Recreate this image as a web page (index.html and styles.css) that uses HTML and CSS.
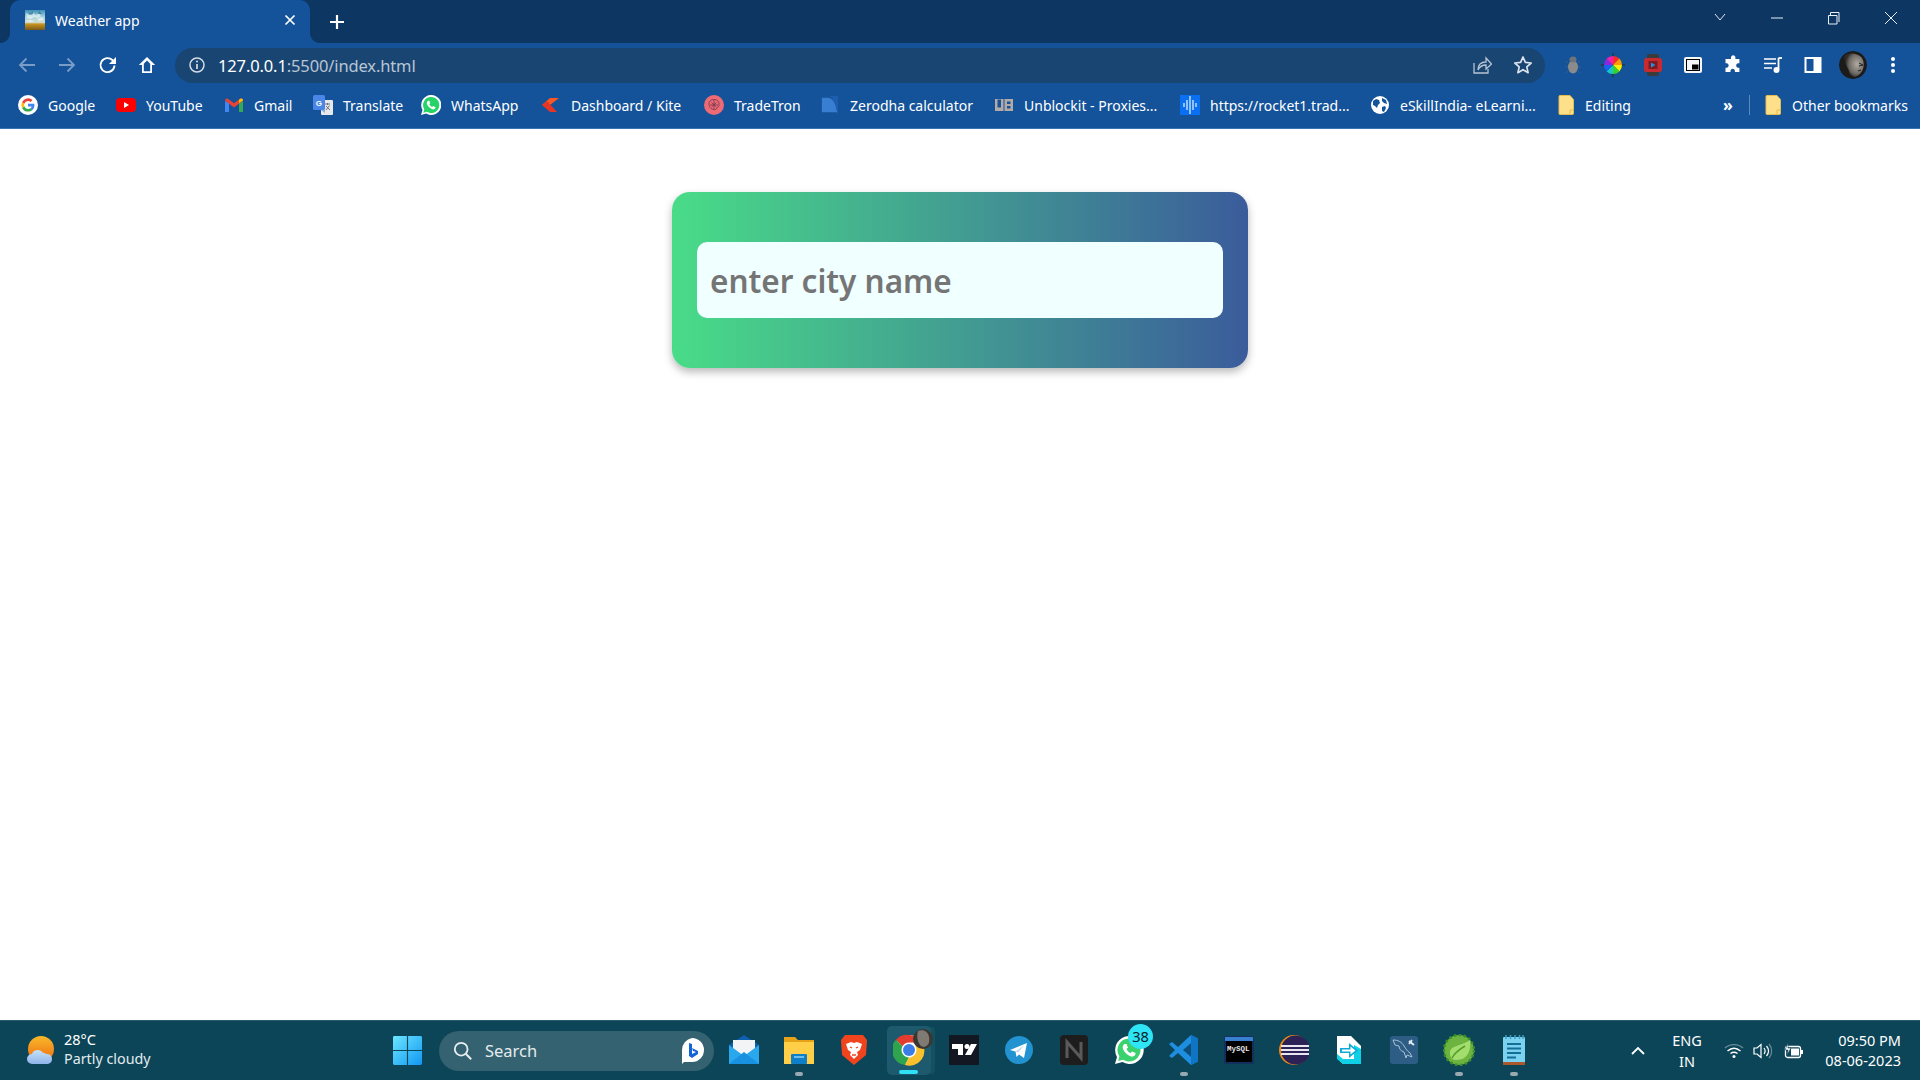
FILE: index.html
```html
<!DOCTYPE html>
<html lang="en">
<head>
<meta charset="utf-8">
<title>Weather app</title>
<link rel="stylesheet" href="styles.css">
</head>
<body>
<div class="browser">
  <header class="tabstrip">
    <div class="tab">
      <svg class="ico20" viewBox="0 0 20 20"><defs><linearGradient id="sky" x1="0" y1="0" x2="0" y2="1"><stop offset="0" stop-color="#3f8fb5"/><stop offset=".35" stop-color="#a9d3df"/><stop offset=".62" stop-color="#cfdcd0"/><stop offset=".7" stop-color="#c9941e"/><stop offset="1" stop-color="#7a5a1a"/></linearGradient></defs><rect width="20" height="20" fill="url(#sky)"/><path d="M1 3l3 2 3-3 4 3 3-2 2 3-3 2-4-1-3 2-4-1zM12 9l5-2 2 3-5 1zM0 11l5-1 5 1-4 1z" fill="#fff" opacity=".55"/><path d="M3 1l2 2 3-2v3l-3 1zM14 1l3 3-4 0z" fill="#1f6f97" opacity=".7"/></svg>
      <span class="tab-title">Weather app</span>
      <svg class="tab-close" viewBox="0 0 12 12"><path d="M1.500 1.500l9 9M10.500 1.500l-9 9" stroke="#fff" stroke-width="1.700" fill="none"/></svg>
    </div>
    <svg class="newtab" viewBox="0 0 14 14"><path d="M7 0v14M0 7h14" stroke="#fff" stroke-width="2.200"/></svg>
    <div class="winctl">
      <svg class="wc" viewBox="0 0 46 20"><path d="M18 6l5 6 5-6" stroke="#dfe7ef" fill="none"/></svg>
      <svg class="wc wc-gap" viewBox="0 0 46 20"><path d="M17 10h12" stroke="#e8eef4"/></svg>
      <svg class="wc wc-gap" viewBox="0 0 46 20"><path d="M17.500 7.500h8.500v8.500h-8.500zM19.500 7v-2.500h8.500v9.500" stroke="#e8eef4" fill="none"/></svg>
      <svg class="wc wc-gap" viewBox="0 0 46 20"><path d="M17 4l12 12M29 4l-12 12" stroke="#e8eef4" fill="none"/></svg>
    </div>
  </header>

  <nav class="toolbar">
    <span class="tb"><svg class="ico20" viewBox="0 0 20 20"><path d="M18 10H3M9.500 3.500L3 10l6.500 6.500" stroke="#7a9cc6" stroke-width="1.800" fill="none"/></svg></span>
    <span class="tb"><svg class="ico20" viewBox="0 0 20 20"><path d="M2 10h15M10.500 3.500L17 10l-6.500 6.500" stroke="#7a9cc6" stroke-width="1.800" fill="none"/></svg></span>
    <span class="tb tb-reload"><svg class="ico20" viewBox="0 0 20 20"><path d="M16.500 10.500a7 7 0 1 1-2-5.300L17 7.500" stroke="#fff" stroke-width="1.900" fill="none"/><path d="M18 2v7h-7z" fill="#fff"/></svg></span>
    <span class="tb"><svg class="ico20" viewBox="0 0 20 20"><path d="M10 2L1.800 10H5v8h10v-8h3.200zM6.800 16.200V8.800L10 5.600l3.200 3.200v7.400z" fill="#fff" fill-rule="evenodd"/></svg></span>
    <div class="omnibox">
      <svg class="info" viewBox="0 0 16 16"><circle cx="8" cy="8" r="7" stroke="#d5dde6" stroke-width="1.500" fill="none"/><path d="M8 7v5" stroke="#d5dde6" stroke-width="1.700"/><circle cx="8" cy="4.600" r="1" fill="#d5dde6"/></svg>
      <span class="url">127.0.0.1<span class="url-dim">:5500/index.html</span></span>
      <svg class="omni-ico" viewBox="0 0 20 20"><path d="M2 8v10h14v-4" stroke="#b7c3d1" stroke-width="1.300" fill="none"/><path d="M6 15c0-5 3-8 8-8V3l5.500 6-5.500 5v-4c-4 0-6 1-8 5z" stroke="#b7c3d1" stroke-width="1.300" fill="none"/></svg>
      <svg class="omni-ico star" viewBox="0 0 20 20"><path d="M10 2l2.400 5.400 5.800.6-4.400 3.900 1.300 5.800L10 14.700l-5.100 3 1.300-5.800L1.800 8l5.800-.6z" stroke="#dbe3ec" stroke-width="1.700" fill="none" stroke-linejoin="round"/></svg>
    </div>
    <div class="exts">
      <span class="tb"><svg class="ico20" viewBox="0 0 20 20"><ellipse cx="10" cy="12" rx="5" ry="6.500" fill="#8b8b8b"/><ellipse cx="10" cy="4.500" rx="3.500" ry="3" fill="#6e7479"/><path d="M5 8l-2-2M15 8l2-2M5 12H2M15 12h3M5 16l-2 2M15 16l2 2" stroke="#3f5d7e"/></svg></span>
      <span class="tb"><svg class="ico24" viewBox="0 0 24 24"><path d="M12 0v24M0 12h24" stroke="#253746" stroke-width="1.500"/><path d="M12 12V3a9 9 0 0 1 6.400 2.600z" fill="#ff2a2a"/><path d="M12 12l6.400-6.400A9 9 0 0 1 21 12z" fill="#ff9a00"/><path d="M12 12h9a9 9 0 0 1-2.600 6.400z" fill="#f5ef00"/><path d="M12 12l6.400 6.400A9 9 0 0 1 12 21z" fill="#35d42b"/><path d="M12 12v9a9 9 0 0 1-6.400-2.600z" fill="#18c8c8"/><path d="M12 12l-6.400 6.400A9 9 0 0 1 3 12z" fill="#1c62f0"/><path d="M12 12H3a9 9 0 0 1 2.600-6.400z" fill="#8a28e0"/><path d="M12 12L5.600 5.600A9 9 0 0 1 12 3z" fill="#f021b0"/></svg></span>
      <span class="tb"><svg class="ico24" viewBox="0 0 24 24"><rect x="6" y="1" width="12" height="22" rx="2" fill="#3b3b3b"/><rect x="3" y="5" width="18" height="14" rx="2.500" fill="#c92a2f"/><rect x="7.500" y="8" width="9" height="8" fill="#7a1c22"/><path d="M10 9.500v5l4.500-2.500z" fill="#2d8be0"/></svg></span>
      <span class="tb"><svg class="ico20" viewBox="0 0 20 20"><rect x="1" y="2" width="18" height="16" rx="2" fill="#f4f6f8"/><rect x="3" y="4" width="14" height="12" fill="#000"/><rect x="4" y="5" width="12" height="10" fill="#f4f6f8"/><rect x="9" y="9.500" width="6.500" height="5" fill="#000"/></svg></span>
      <span class="tb"><svg class="ico20" viewBox="0 0 20 20"><path d="M8 2a2.300 2.300 0 0 1 4.400 0v2h4v4.300h-1.600a2.300 2.300 0 0 0 0 4.400h1.600V17h-4.500v-1.500a2.300 2.300 0 0 0-4.400 0V17H2.500v-4.300H4a2.300 2.300 0 0 0 0-4.400H2.500V4H8z" fill="#fff"/></svg></span>
      <span class="tb"><svg class="ico20" viewBox="0 0 20 20"><path d="M1 4h12M1 8.500h12M1 13h8" stroke="#fff" stroke-width="1.700"/><path d="M15.500 3v11.500" stroke="#fff" stroke-width="1.800"/><path d="M15.500 3H19" stroke="#fff" stroke-width="1.800"/><circle cx="13.500" cy="15" r="3" fill="#fff"/></svg></span>
      <span class="tb"><svg class="ico20" viewBox="0 0 20 20"><path d="M1.500 2h17v16h-17zM3.500 4v12h7V4z" fill="#fff" fill-rule="evenodd"/></svg></span>
      <span class="tb"><span class="avatar"><svg class="ico28" viewBox="0 0 28 28"><defs><radialGradient id="face" cx=".65" cy=".45" r=".6"><stop offset="0" stop-color="#b0aaa2"/><stop offset=".7" stop-color="#6d6963"/><stop offset="1" stop-color="#2d2b29"/></radialGradient></defs><circle cx="14" cy="14" r="14" fill="#1c1b1a"/><path d="M6 4c6-3 16-1 18 5 2 6 0 14-8 17-4-1-6-3-6-6-2-4-6-11-4-16z" fill="url(#face)"/><path d="M20 12l4 2-4 1M19 20l3-1" stroke="#222" fill="none"/></svg></span></span>
      <span class="tb"><svg class="ico20" viewBox="0 0 20 20"><circle cx="10" cy="4" r="2" fill="#fff"/><circle cx="10" cy="10" r="2" fill="#fff"/><circle cx="10" cy="16" r="2" fill="#fff"/></svg></span>
    </div>
  </nav>

  <div class="bookmarks">
    <a class="bm"><svg class="ico20" viewBox="0 0 20 20"><circle cx="10" cy="10" r="10" fill="#fff"/><path d="M16.400 10.200c0-.5 0-1-.1-1.400H10v2.700h3.600a3 3 0 0 1-1.300 2l2.100 1.600c1.200-1.200 2-2.900 2-4.900z" fill="#4285f4"/><path d="M10 16.500c1.800 0 3.300-.6 4.400-1.600l-2.100-1.600a4 4 0 0 1-6-2.100l-2.200 1.700a6.500 6.500 0 0 0 5.900 3.600z" fill="#34a853"/><path d="M6.300 11.200a4 4 0 0 1 0-2.500L4.100 7a6.500 6.500 0 0 0 0 5.900z" fill="#fbbc05"/><path d="M10 6c1 0 1.900.3 2.600 1l1.900-1.900A6.500 6.500 0 0 0 4.100 7l2.200 1.700A3.900 3.900 0 0 1 10 6z" fill="#ea4335"/></svg><span class="bm-t t-google">Google</span></a>
    <a class="bm"><svg class="ico20" viewBox="0 0 20 20"><rect y="3" width="20" height="14" rx="4" fill="#f00"/><path d="M8 7v6l5-3z" fill="#fff"/></svg><span class="bm-t t-yt">YouTube</span></a>
    <a class="bm"><svg class="ico18" viewBox="0 0 18 14"><path d="M0 3v11h4V5z" fill="#4285f4"/><path d="M14 5v9h4V3z" fill="#34a853"/><path d="M0 2.500a2 2 0 0 1 3.200-1.600L9 5.300l5.800-4.400A2 2 0 0 1 18 2.500L9 9.500z" fill="#ea4335"/><path d="M14 1.700V5l4-2.500V2a2 2 0 0 0-3.200-1.100z" fill="#fbbc05"/></svg><span class="bm-t t-gmail">Gmail</span></a>
    <a class="bm"><svg class="ico20" viewBox="0 0 20 20"><rect x="8" y="5" width="12" height="15" rx="1" fill="#e6e8ec"/><path d="M12 9h5M14.500 8v2M13 15l3.500-4.500M13 11l4 4" stroke="#666" stroke-width=".9" fill="none"/><rect width="12" height="15" rx="1.500" fill="#4a86e8"/><text x="2.800" y="11" class="gt">G</text><path d="M8 15l4 3v-3z" fill="#8faadc"/></svg><span class="bm-t t-tr">Translate</span></a>
    <a class="bm"><svg class="ico20" viewBox="0 0 20 20"><path d="M10 0a10 10 0 0 0-8.500 15L0 20l5.200-1.400A10 10 0 1 0 10 0z" fill="#fff"/><path d="M10 2a8 8 0 0 0-6.700 12.200l-1 3.500 3.600-1A8 8 0 1 0 10 2z" fill="#25d366"/><path d="M7.300 5.800c-.5 0-1.500 1-1.500 2.300 0 2.500 3.500 6 6.300 6.300 1.300 0 2.300-1 2.300-1.700v-.8l-2.300-1-1 1c-1.200-.4-2.300-1.500-2.800-2.800l1-.9-1-2.400z" fill="#fff"/></svg><span class="bm-t t-wa">WhatsApp</span></a>
    <a class="bm"><svg class="ico18" viewBox="0 0 18 14"><path d="M0 7l8-7h9L8 7z" fill="#ff5722"/><path d="M0 7l5-4 10 11H8z" fill="#e53525"/></svg><span class="bm-t t-kite">Dashboard / Kite</span></a>
    <a class="bm"><svg class="ico20" viewBox="0 0 20 20"><circle cx="10" cy="10" r="10" fill="#ee6a74"/><path d="M6 6c2-2 6-2 8 0 2 2 1 6-1 7l-2 2-3-1c-3-1-4-6-2-8zM10 5v9M6 10h8M7.500 7.500L12.500 12M12.500 7.500L7.500 12" stroke="#7d3c54" fill="none" stroke-width=".9"/></svg><span class="bm-t t-tt">TradeTron</span></a>
    <a class="bm"><svg class="ico18" viewBox="0 0 18 20"><path d="M0 2h7c6 1 9 8 10 16H0z" fill="#387ed1"/><path d="M8 0h10v20h-1C16 10 13 3 8 0z" fill="#1d5fae"/></svg><span class="bm-t t-zc">Zerodha calculator</span></a>
    <a class="bm"><svg class="ico18" viewBox="0 0 18 14"><path d="M0 1h8.500v12H0zM2.500 1.500v8h3.500v-8zM9.500 1H18v12H9.500zM12 3.500v2.500h3.500V3.500zM12 8v2.500h3.500V8z" fill="#b3aaa8" fill-rule="evenodd"/></svg><span class="bm-t t-ub">Unblockit - Proxies...</span></a>
    <a class="bm"><svg class="ico20" viewBox="0 0 20 20"><rect width="20" height="20" fill="#0a6ff0"/><path d="M10 1v18M7 5v10M13 5v10M4 8v4M16 8v4" stroke="#d9efff" stroke-width="1.300"/></svg><span class="bm-t t-rk">https://rocket1.trad...</span></a>
    <a class="bm"><svg class="ico20" viewBox="0 0 20 20"><circle cx="10" cy="10" r="9" fill="#fff"/><path d="M3 6l3-2 3 1 1 3-2 2-1 3-2-2-2-1zM12 3l4 2 1 4-3-1-2-2zM12 12l3-1 1 2-2 4-2-1z" fill="#15539b"/></svg><span class="bm-t t-es">eSkillIndia- eLearni...</span></a>
    <a class="bm"><svg class="ico-folder" viewBox="0 0 16 20"><path d="M1 1.500a1 1 0 0 1 1-1h10l3.500 4v14a1 1 0 0 1-1 1H2a1 1 0 0 1-1-1z" fill="#fee08a" stroke="#e4bd4e"/><path d="M15 15h-3v4" fill="none" stroke="#e4bd4e"/></svg><span class="bm-t t-ed">Editing</span></a>
    <span class="more">»</span>
    <span class="sep"></span>
    <a class="bm"><svg class="ico-folder" viewBox="0 0 16 20"><path d="M1 1.500a1 1 0 0 1 1-1h10l3.500 4v14a1 1 0 0 1-1 1H2a1 1 0 0 1-1-1z" fill="#fee08a" stroke="#e4bd4e"/><path d="M15 15h-3v4" fill="none" stroke="#e4bd4e"/></svg><span class="bm-t t-ob">Other bookmarks</span></a>
  </div>

  <main class="page">
    <form class="card">
      <input class="city" type="text" placeholder="enter city name">
    </form>
  </main>

  <footer class="taskbar">
    <div class="weather">
      <svg class="ico32" viewBox="0 0 32 32"><defs><linearGradient id="sun" x1="0" y1="0" x2="0" y2="1"><stop offset="0" stop-color="#f9b82a"/><stop offset="1" stop-color="#ee6c12"/></linearGradient><linearGradient id="cloud" x1="0" y1="0" x2="0" y2="1"><stop offset="0" stop-color="#c7e2f8"/><stop offset="1" stop-color="#8fb4ea"/></linearGradient></defs><circle cx="15" cy="14" r="13" fill="url(#sun)"/><path d="M6 29a5 5 0 0 1 0-10c1-4 8-6 11-1 1-.500 2 0 3 1a5 5 0 0 1 6 5 5 5 0 0 1-4 5z" fill="url(#cloud)"/></svg>
      <div class="w-text"><span class="w-temp">28°C</span><span class="w-desc">Partly cloudy</span></div>
    </div>
    <svg class="start" viewBox="0 0 30 30"><defs><linearGradient id="win" x1="0" y1="0" x2="1" y2="1"><stop offset="0" stop-color="#6be6ff"/><stop offset="1" stop-color="#1197f2"/></linearGradient></defs><path d="M0 1.500A1.500 1.500 0 0 1 1.500 0h12.900v14.400H0zM15.600 0h12.900A1.500 1.500 0 0 1 30 1.500v12.900H15.600zM0 15.600h14.400V30H1.500A1.500 1.500 0 0 1 0 28.500zM15.600 15.600H30v12.900a1.500 1.500 0 0 1-1.500 1.500H15.600z" fill="url(#win)"/></svg>
    <div class="search">
      <svg class="s-glass" viewBox="0 0 22 22"><circle cx="9" cy="9" r="7" stroke="#e8eef0" stroke-width="2" fill="none"/><path d="M14 14l6 6" stroke="#e8eef0" stroke-width="2.200"/></svg>
      <span class="s-text">Search</span>
      <svg class="s-bing" viewBox="0 0 26 28"><path d="M13 1a12 12 0 0 1 0 24H5l-2 2V13A12 12 0 0 1 13 1z" fill="#fff"/><path d="M10 6l3 1v10l4-2-3-1-1-3 6 3v3l-6 4-3-2z" fill="#1464d8"/></svg>
    </div>
    <div class="apps">
      <span class="app"><svg class="ico32" viewBox="0 0 32 32"><path d="M1 11L16 1l15 10v17H1z" fill="#0f5fb0"/><path d="M5 6h22v14H5z" fill="#f2f4f6"/><path d="M1 11l15 11 15-11v19H1z" fill="#2aa8ee"/><path d="M1 30l15-12 15 12z" fill="#1892e0"/></svg></span>
      <span class="app"><svg class="ico32" viewBox="0 0 32 32"><path d="M1 3h11l3 3h16v6H1z" fill="#e6a317"/><path d="M1 8h30v22H1z" fill="#ffcf48"/><rect x="8" y="20" width="16" height="10" rx="1" fill="#0e7fc8"/><path d="M11 23h10" stroke="#8fd0f5" stroke-width="1.500"/></svg><i class="dot"></i></span>
      <span class="app"><svg class="ico32" viewBox="0 0 32 32"><path d="M7 1h18l4 5-1 15-12 10L4 21 3 6z" fill="#f0441f"/><path d="M8 10l5-2 3 1 3-1 5 2-2 6-3 2 1 3-4 4-4-4 1-3-3-2z" fill="#fff"/><path d="M12 13l2 1M18 14l2-1M14 21h4" stroke="#f0441f" stroke-width="1.300"/></svg></span>
      <span class="app app-active"><svg class="ico32" viewBox="0 0 32 32"><circle cx="16" cy="16" r="15" fill="#fff"/><path d="M16 1a15 15 0 0 1 13 7.500H16a7.500 7.500 0 0 0-6.500 3.800L3 5.800A15 15 0 0 1 16 1z" fill="#e33b2e"/><path d="M3 5.800l6.500 6.500a7.500 7.500 0 0 0 6.500 11.200L12 31A15 15 0 0 1 3 5.800z" fill="#2ea44f"/><path d="M29 8.500A15 15 0 0 1 12 31l4-7.500a7.500 7.500 0 0 0 6.500-11.200z" fill="#f9c02b"/><circle cx="16" cy="16" r="6" fill="#3a7de8"/></svg><svg class="badge-avatar" viewBox="0 0 20 20"><circle cx="10" cy="10" r="10" fill="#3a3733"/><path d="M5 2c5-2 10 0 11 6s-1 9-5 10c-3 0-5-3-6-6s-1-7 0-10z" fill="#7f7a73"/></svg><i class="bar"></i></span>
      <span class="app"><svg class="ico30" viewBox="0 0 30 30"><rect width="30" height="30" fill="#131722"/><path d="M3 9h11v11H9v-6H3z" fill="#fff"/><circle cx="18" cy="11.500" r="2.500" fill="#fff"/><path d="M22 9h6l-6 11h-6z" fill="#fff"/></svg></span>
      <span class="app"><svg class="ico28" viewBox="0 0 28 28"><circle cx="14" cy="14" r="14" fill="#2392d0"/><path d="M5 14L22 7l-3 15-5-3.500-2.500 2.500-1-5.500z" fill="#fff"/><path d="M10.500 15.500l9-6.500-6.500 7.500" fill="#b7dcf0"/></svg></span>
      <span class="app"><svg class="ico30" viewBox="0 0 30 30"><rect x="1" width="28" height="30" rx="4" fill="#1d1d1d"/><path d="M8 23V7l14 16V7" stroke="#5a5a5a" stroke-width="3" fill="none"/></svg></span>
      <span class="app"><svg class="ico32" viewBox="0 0 32 32"><path d="M16 2a14 14 0 0 0-12 21L2 30l7.500-2A14 14 0 1 0 16 2z" fill="#fff"/><path d="M16 4.500a11.500 11.500 0 0 0-9.600 17.800L5.300 27l4.700-1.200A11.500 11.500 0 1 0 16 4.500z" fill="#3bd16f"/><path d="M12 10c-1 0-2.300 1.500-2.300 3.300 0 3.700 5.300 9 9.400 9.400 2 0 3.400-1.500 3.400-2.600v-1.100l-3.400-1.500-1.500 1.500c-1.800-.6-3.400-2.200-4.100-4.100l1.500-1.400-1.500-3.500z" fill="#fff"/></svg><span class="badge">38</span></span>
      <span class="app"><svg class="ico32" viewBox="0 0 32 32"><path d="M23 1l7 3.500v23L23 31 10 19l-6 5-3-2 6-6-6-6 3-2 6 5z" fill="#1e8fe0"/><path d="M23 1l7 3.500v23L23 31V1z" fill="#0f74c4"/><path d="M23 9l-8 7 8 7z" fill="#0b4f7a"/></svg><i class="dot"></i></span>
      <span class="app"><svg class="ico30" viewBox="0 0 30 30"><rect y="1" width="30" height="28" rx="2" fill="#12305e"/><rect x="1" y="2" width="28" height="4" fill="#3a80d0"/><rect x="2" y="6" width="26" height="21" fill="#000"/><text x="3" y="15.500" class="my">MySQL</text></svg></span>
      <span class="app"><svg class="ico30" viewBox="0 0 30 30"><circle cx="15" cy="15" r="15" fill="#f08a17"/><circle cx="16.500" cy="15" r="14.500" fill="#2c2255"/><path d="M2 11h29M2 15h29M2 19h29" stroke="#e8e6f0" stroke-width="2.200"/></svg></span>
      <span class="app"><svg class="ico30" viewBox="0 0 30 30"><path d="M3 1h14l10 10v18H9l-6-6z" fill="#fff"/><path d="M3 19l6 5h18v5H9l-6-5z" fill="#0fd0e6"/><path d="M20 10l7 4v15h-7z" fill="#0fd0e6"/><path d="M6 13h9V8l9 7.500-9 7.500v-5H6z" fill="#0fa9d6"/><path d="M8 14.500h8.500v-3l5 4-5 4v-3H8z" fill="#fff"/></svg></span>
      <span class="app"><svg class="ico28" viewBox="0 0 28 28"><rect width="28" height="28" rx="3" fill="#2d5d85"/><path d="M3 4c5 0 9 2 11 6 2 3 3 5 6 7l2 4-5-2-1 3-2-6c-3-1-5-3-5-6L5 9z" fill="none" stroke="#a8c2d6" stroke-width="1"/><path d="M19 5l5 4M22 4l-3 4" stroke="#e4edf3" stroke-width="1.800"/></svg></span>
      <span class="app"><svg class="ico32" viewBox="0 0 32 32"><circle cx="16" cy="16" r="15" fill="#6cb33f"/><circle cx="16" cy="16" r="15" fill="none" stroke="#3a8f2a" stroke-width="2.500" stroke-dasharray="2.500 2.500"/><path d="M27 6c1 9-1 20-14 20-4 0-6-3-6-7 0-8 10-6 20-13z" fill="#a3dd6d"/><path d="M9 24c3-6 8-9 13-12" stroke="#4f9d2b" stroke-width="1.500" fill="none"/></svg><i class="dot"></i></span>
      <span class="app"><svg class="ico-note" viewBox="0 0 22 30"><rect y="2" width="22" height="28" rx="1" fill="#7bd2f0"/><rect y="27" width="22" height="3" fill="#a8582a"/><path d="M4 9h14M4 13.500h14M4 18h14M4 22.500h9" stroke="#136f96" stroke-width="2"/><path d="M3 0v4M7.500 0v4M12 0v4M16.500 0v4M20 0v4" stroke="#3aa0c4" stroke-width="1.500"/></svg><i class="dot"></i></span>
    </div>
    <div class="tray">
      <svg class="t-chev" viewBox="0 0 14 9"><path d="M1 8l6-6 6 6" stroke="#fff" stroke-width="1.800" fill="none"/></svg>
      <div class="lang"><span>ENG</span><span>IN</span></div>
      <svg class="t-wifi" viewBox="0 0 20 16"><path d="M1 5c5-4.500 13-4.500 18 0" stroke="#6b8d99" stroke-width="1.300" fill="none"/><path d="M3.500 8c4-3.500 9-3.500 13 0M6.500 10.500c2-1.500 5-1.500 7 0" stroke="#fff" stroke-width="1.400" fill="none"/><circle cx="10" cy="13.500" r="1.500" fill="#fff"/></svg>
      <svg class="t-vol" viewBox="0 0 20 16"><path d="M1 5h3l4-3.500v13L4 11H1z" stroke="#fff" stroke-width="1.200" fill="none"/><path d="M11 5c1.500 2 1.500 4 0 6M13.500 3c2.500 3 2.500 7 0 10" stroke="#fff" stroke-width="1.200" fill="none"/><path d="M16 1c3.500 4 3.500 10 0 14" stroke="#6b8d99" stroke-width="1.200" fill="none"/></svg>
      <svg class="t-bat" viewBox="0 0 20 16"><rect x="1.500" y="3.500" width="15" height="11" rx="2" stroke="#fff" stroke-width="1.300" fill="none"/><rect x="17" y="7" width="2" height="4" fill="#fff"/><rect x="7" y="5.500" width="8" height="7" fill="#fff"/><path d="M4 0L1 7h3l-1 5 4-7H4z" fill="#fff" stroke="#0c4558" stroke-width=".6"/></svg>
      <div class="clock"><span>09:50 PM</span><span>08-06-2023</span></div>
    </div>
  </footer>
</div>
</body>
</html>
```
FILE: styles.css
```css
* { box-sizing: border-box; }
html, body { margin: 0; height: 100%; }
body { font-family: "Noto Sans", "Open Sans", "Liberation Sans", sans-serif; color: #fff; background: #fff; }
svg { display: block; flex: none; }
.browser { height: 1080px; display: flex; flex-direction: column; overflow: hidden; }

.ico18 { width: 18px; height: 18px; }
.ico20 { width: 20px; height: 20px; }
.ico24 { width: 24px; height: 24px; }
.ico28 { width: 28px; height: 28px; }
.ico30 { width: 30px; height: 30px; }
.ico32 { width: 32px; height: 32px; }
.ico-folder { width: 16px; height: 20px; }
.ico-note { width: 22px; height: 30px; }

/* tab strip */
.tabstrip { height: 43px; background: #0d3663; display: flex; align-items: flex-end; padding-left: 10px; flex: none; }
.tab { position: relative; width: 300px; height: 43px; background: #14539a; border-radius: 10px 10px 0 0; display: flex; align-items: center; padding: 0 15px 3px 15px; }
.tab::before, .tab::after { content: ""; position: absolute; bottom: 0; width: 10px; height: 10px; }
.tab::before { left: -10px; background: radial-gradient(circle at 0 0, transparent 9.500px, #14539a 10.500px); }
.tab::after { right: -10px; background: radial-gradient(circle at 100% 0, transparent 9.500px, #14539a 10.500px); }
.tab-title { margin-left: 10px; font-size: 14px; flex: 1; }
.tab-close { width: 12px; height: 12px; margin-right: -1px; }
.newtab { width: 14px; height: 14px; margin: 0 0 14px 20px; }
.winctl { margin-left: auto; display: flex; align-self: flex-start; padding: 8px 6px 0 0; }
.wc { width: 46px; height: 20px; }
.wc-gap { margin-left: 11px; }

/* toolbar */
.toolbar { height: 40px; background: #14539a; display: flex; align-items: flex-end; padding-left: 7px; flex: none; }
.tb { width: 40px; height: 35px; padding-bottom: 1px; display: flex; align-items: center; justify-content: center; flex: none; }
.tb-reload { padding-left: 2px; }
.omnibox { width: 1370px; height: 35px; margin-left: 8px; border-radius: 18px; background: #194573; display: flex; align-items: center; padding: 0 12px 1px 14px; }
.info { width: 16px; height: 16px; }
.url { margin-left: 13px; font-size: 16.500px; letter-spacing: -.13px; flex: 1; }
.url-dim { color: #b9c6d4; }
.omni-ico { width: 20px; height: 20px; }
.star { margin-left: 21px; }
.exts { display: flex; margin-left: 8px; }
.avatar { width: 28px; height: 28px; border-radius: 50%; overflow: hidden; }

/* bookmarks */
.bookmarks { height: 46px; background: #14539a; border-bottom: 1px solid #3b74b4; display: flex; align-items: center; padding: 0 0 1px 18px; flex: none; font-size: 14px; }
.bm { display: flex; align-items: center; flex: none; }
.bm-t { margin-left: 10px; white-space: nowrap; }
.t-google { width: 48px; margin-right: 20px; }
.t-yt { width: 58px; margin-right: 21px; }
.t-gmail { width: 38px; margin: 0 21px 0 11px; }
.t-tr { width: 58px; margin-right: 20px; }
.t-wa { width: 69px; margin-right: 22px; }
.t-kite { width: 112px; margin: 0 21px 0 11px; }
.t-tt { width: 65px; margin-right: 22px; }
.t-zc { width: 124px; margin: 0 21px 0 11px; }
.t-ub { width: 135px; margin: 0 21px 0 11px; }
.t-rk { width: 138px; margin-right: 22px; }
.t-es { width: 136px; margin-right: 22px; }
.t-ed { width: 47px; margin-left: 11px; }
.more { margin-left: 91px; font-size: 16px; font-weight: 700; width: 12px; }
.sep { width: 1px; height: 20px; background: #5e8abb; margin: 0 15px 0 14px; }
.t-ob { margin-left: 11px; }

/* page */
.page { flex: 1; background: #fff; padding-top: 63px; }
.card { width: 576px; margin: 0 auto; padding: 50px 25px; border-radius: 18px; background: linear-gradient(to right, #49dc88, #3b5c9b); box-shadow: 0 4px 8px rgba(0, 0, 0, .28); }
.city { display: block; width: 100%; height: 76px; border: 0; outline: 0; border-radius: 10px; background: #f0ffff; padding: 0 13px; font: 600 31.500px "Noto Sans", sans-serif; color: #333; }
.city::placeholder { color: #757575; opacity: 1; }

/* taskbar */
.taskbar { height: 60px; background: #0c4558; border-top: 1px solid #2a5b6c; display: flex; align-items: center; flex: none; font-size: 14.500px; }
.weather { width: 393px; padding: 0 0 0 26px; display: flex; align-items: center; gap: 6px; }
.w-text { display: flex; flex-direction: column; line-height: 20px; margin-top: -4px; }
.w-desc { color: #e2ebee; font-size: 14.300px; }
.start { width: 29px; height: 29px; }
.search { width: 275px; height: 40px; margin-left: 17px; border-radius: 20px; background: #346270; display: flex; align-items: center; padding: 0 9px 0 14px; }
.s-glass { width: 20px; height: 20px; }
.s-text { margin-left: 12px; font-size: 16.500px; color: #e4ecee; flex: 1; }
.s-bing { width: 26px; height: 28px; }
.apps { display: flex; margin-left: 2px; }
.app { position: relative; width: 55px; height: 49px; padding-bottom: 2px; display: flex; align-items: center; justify-content: center; }
.app-active { background: #1d5a6d; border-radius: 5px; width: 44px; margin: 0 5.500px; box-shadow: 5px 0 0 -1px #15505f; }
.dot { position: absolute; left: 50%; bottom: -1px; width: 8px; height: 4px; margin-left: -4px; border-radius: 2px; background: #98a9b0; }
.bar { position: absolute; left: 50%; bottom: 1px; width: 19px; height: 4px; margin-left: -9.500px; border-radius: 2px; background: #2ee0f8; }
.badge { position: absolute; top: -2px; left: 27px; width: 25px; height: 25px; border-radius: 50%; background: #2ee4f5; color: #06222c; font-size: 14.500px; line-height: 25px; text-align: center; }
.badge-avatar { position: absolute; top: 3px; right: -2px; width: 20px; height: 20px; }
.tray { margin-left: auto; display: flex; align-items: center; padding-right: 19px; }
.t-chev { width: 14px; height: 9px; }
.lang { width: 60px; margin-left: 12.500px; display: flex; flex-direction: column; align-items: center; line-height: 21px; }
.t-wifi { width: 20px; height: 16px; margin-left: 7px; }
.t-vol { width: 20px; height: 16px; margin-left: 9px; }
.t-bat { width: 20px; height: 16px; margin-left: 11px; }
.clock { width: 97px; margin-top: -2px; display: flex; flex-direction: column; align-items: flex-end; line-height: 20px; }
.gt { font: 700 8px "Liberation Sans", sans-serif; fill: #fff; }
.my { font: 700 7.500px "Liberation Mono", monospace; fill: #e8e8e8; }
```
